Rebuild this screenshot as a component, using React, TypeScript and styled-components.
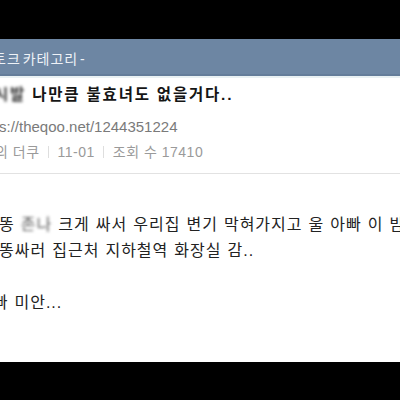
import * as React from 'react';
import styled, { createGlobalStyle } from 'styled-components';

const FONT = '"Liberation Sans", "Noto Sans CJK KR", sans-serif';

const GlobalStyle = createGlobalStyle`
  *, *::before, *::after {
    box-sizing: border-box;
  }
  html, body {
    margin: 0;
    padding: 0;
    background: #000;
  }
`;

// <Screen>
const Screen = styled.div`
  width: 400px;
  height: 400px;
  display: flex;
  flex-direction: column;
  overflow: hidden;
  background: #000;
  font-family: ${FONT};
`;

const BlackBand = styled.div<{ $height: number }>`
  flex: 0 0 ${p => p.$height}px;
  background: #000;
`;
// </Screen>

// <CategoryBar>
const CategoryBar = styled.div`
  flex: 0 0 39px;
  display: flex;
  align-items: center;
  background: #6d86a3;
  border-bottom: 2px solid #e9f1f3;
  box-shadow: inset 0 -2px 0 #647d9a;
  color: #eef2f7;
  font-size: 14px;
  letter-spacing: 1px;
  word-spacing: -3px;
  white-space: nowrap;
`;
// </CategoryBar>

// <Post>
const Post = styled.div`
  flex: 1;
  display: flex;
  flex-direction: column;
  background: #fff;
  overflow: hidden;
`;

const PostHead = styled.div`
  display: flex;
  flex-direction: column;
  padding: 6px 0 11px;
  border-bottom: 1px solid #e2e2e2;
`;

const Title = styled.div`
  height: 22px;
  font-size: 15.5px;
  font-weight: bold;
  line-height: 22px;
  letter-spacing: 1.8px;
  color: #151515;
  white-space: nowrap;
`;

const Url = styled.div`
  height: 20px;
  margin-top: 11px;
  font-size: 15px;
  line-height: 20px;
  color: #7a7a7a;
  white-space: nowrap;
`;

const Meta = styled.div`
  height: 20px;
  margin-top: 5px;
  display: flex;
  align-items: center;
  font-size: 14px;
  line-height: 20px;
  letter-spacing: 0.5px;
  color: #9a9a9a;
  white-space: nowrap;
`;

const Divider = styled.span`
  flex: 0 0 1px;
  height: 12px;
  margin: 0 8.5px;
  background: #dedede;
`;

const Body = styled.div`
  padding-top: 38px;
  font-size: 16px;
  line-height: 26px;
  letter-spacing: 1px;
  word-spacing: 0.6px;
  color: #222;
`;

const Line = styled.div<{ $shift?: number }>`
  margin-left: ${p => p.$shift ?? 0}px;
  white-space: nowrap;
`;

const BodyLine = styled(Line)`
  height: 26px;
`;

const Censored = styled.span<{ $tone?: string; $blur?: number }>`
  filter: blur(${p => p.$blur ?? 1.3}px);
  color: ${p => p.$tone ?? '#666'};
`;
// </Post>

const App: React.FunctionComponent = () => (
  <>
    <GlobalStyle />
    <Screen>
      <BlackBand $height={39} />
      <CategoryBar>
        <Line as="span" $shift={-7}>토크 카테고리 -</Line>
      </CategoryBar>
      <Post>
        <PostHead>
          <Title>
            <Line as="span" $shift={-6}>
              <Censored $tone="#333" $blur={1.6}>시발</Censored> 나만큼 불효녀도 없을거다..
            </Line>
          </Title>
          <Url>
            <Line as="span" $shift={-1}>s://theqoo.net/1244351224</Line>
          </Url>
          <Meta>
            <Line as="span" $shift={-5}>의 더쿠</Line>
            <Divider />
            <span>11-01</span>
            <Divider />
            <span>조회 수 17410</span>
          </Meta>
        </PostHead>
        <Body>
          <BodyLine $shift={-1}>
            똥 <Censored $tone="#555" $blur={1.5}>존나</Censored> 크게 싸서 우리집 변기 막혀가지고 울 아빠 이 밤중에
          </BodyLine>
          <BodyLine $shift={-1}>똥싸러 집근처 지하철역 화장실 감..</BodyLine>
          <BodyLine />
          <BodyLine $shift={-23}>아빠 미안...</BodyLine>
        </Body>
      </Post>
      <BlackBand $height={38} />
    </Screen>
  </>
);

export default App;
